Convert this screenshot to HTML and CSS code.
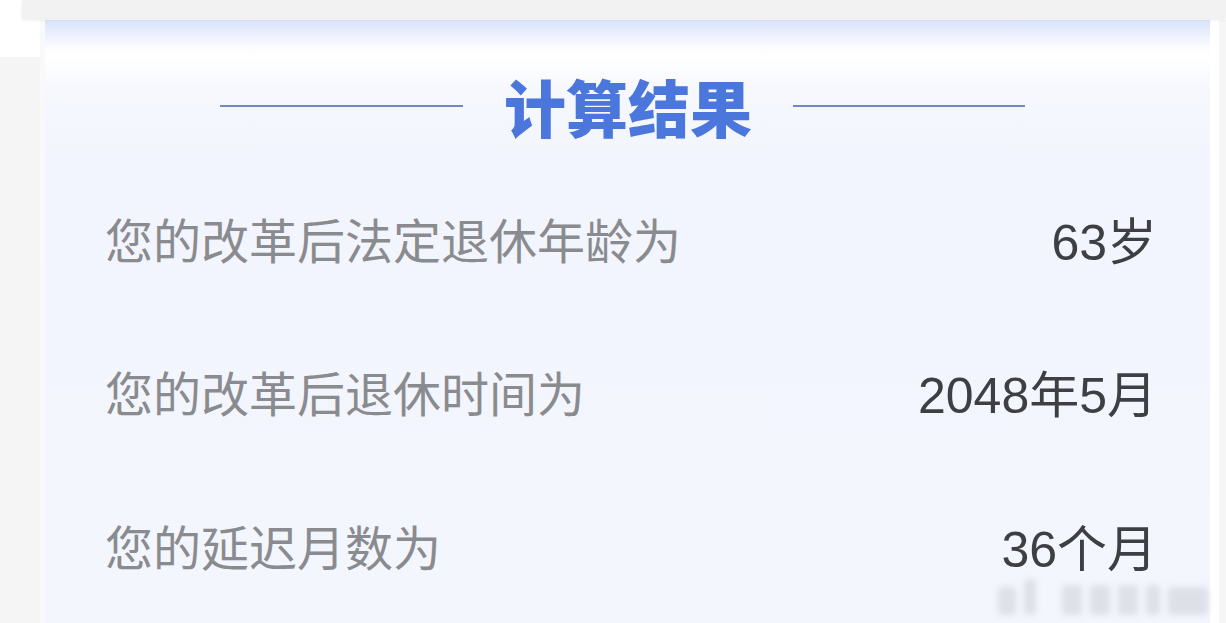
FILE: index.html
```html
<!DOCTYPE html>
<html lang="zh-CN">
<head>
<meta charset="utf-8">
<title>计算结果</title>
<link rel="stylesheet" href="styles.css">
</head>
<body>
<div class="page">
  <div class="topbar"></div>
  <div class="main">
    <div class="gutter gutter-left"></div>
    <section class="card">
      <header class="card-title">
        <span class="rule"></span>
        <h1>计算结果</h1>
        <span class="rule"></span>
      </header>
      <div class="row">
        <span class="label">您的改革后法定退休年龄为</span>
        <span class="value">63岁</span>
      </div>
      <div class="row">
        <span class="label">您的改革后退休时间为</span>
        <span class="value">2048年5月</span>
      </div>
      <div class="row">
        <span class="label">您的延迟月数为</span>
        <span class="value">36个月</span>
      </div>
      <div class="mark">
        <i class="m1"></i><i class="m2"></i><i class="m3"></i><i class="m4"></i><i class="m5"></i><i class="m6"></i><i class="m7"></i>
      </div>
    </section>
    <div class="gutter gutter-right"></div>
  </div>
</div>
</body>
</html>
```
FILE: styles.css
```css
html, body {
  margin: 0;
  padding: 0;
  background: #ffffff;
}

.page {
  width: 1226px;
  height: 623px;
  overflow: hidden;
  display: flex;
  flex-direction: column;
  font-family: "Liberation Sans", "Noto Sans CJK SC", sans-serif;
}

.topbar {
  height: 18px;
  margin-left: 22px;
  background: #f2f2f2;
  box-shadow: 0 2px 3px rgba(0, 0, 0, 0.08);
  position: relative;
  z-index: 2;
  flex: none;
}

.main {
  flex: 1;
  display: flex;
  padding-top: 2px;
}

.gutter {
  flex: none;
}

.gutter-left {
  width: 45px;
  background: linear-gradient(180deg, #ffffff 0 37px, #f5f5f5 37px);
  box-shadow: inset -5px 0 0 #f9f9f9;
}

.gutter-right {
  width: 16px;
  background: linear-gradient(90deg, #ffffff 0 9px, #f6f6f6 9px);
}

.card {
  flex: 1;
  position: relative;
  background: linear-gradient(180deg,
    #d9e4fb 0px,
    #e8eefc 12px,
    #fbfcff 28px,
    #ffffff 36px,
    #f6f8fe 70px,
    #f2f5fd 140px,
    #f3f6fd 100%);
}

.card-title {
  display: flex;
  align-items: center;
  justify-content: center;
  gap: 41px;
  padding: 51px 10px 0 0;
  height: 70px;
  margin-bottom: 26px;
}

.card-title h1 {
  margin: 0;
  font-family: "Noto Sans CJK SC", sans-serif;
  font-weight: 900;
  font-size: 62px;
  line-height: 70px;
  color: #4b77dd;
}

.rule {
  width: 232px;
  height: 2px;
  background: #7686c2;
}

.card-title .rule:first-child {
  width: 243px;
}

.row {
  display: flex;
  align-items: center;
  justify-content: space-between;
  height: 152px;
  padding: 0 53px 0 60px;
}

.row + .row {
  height: 154px;
}

.row:last-of-type {
  height: 146px;
}

.label {
  font-size: 48px;
  color: #8a8b8f;
  line-height: 1;
}

.value {
  font-size: 50px;
  color: #3e3f42;
  line-height: 1;
}

/* faint blurred watermark in the lower right corner */
.mark {
  position: absolute;
  right: 2px;
  bottom: 12px;
  display: flex;
  align-items: flex-end;
  gap: 8px;
  filter: blur(3px);
  opacity: 0.45;
}

.mark i {
  display: block;
  background: #c4c7cc;
  border-radius: 3px;
}

.mark .m1 { width: 18px; height: 28px; }
.mark .m2 { width: 12px; height: 36px; margin-right: 18px; }
.mark .m3 { width: 20px; height: 30px; }
.mark .m4 { width: 20px; height: 30px; }
.mark .m5 { width: 20px; height: 30px; }
.mark .m6 { width: 14px; height: 30px; }
.mark .m7 { width: 40px; height: 28px; }
```
